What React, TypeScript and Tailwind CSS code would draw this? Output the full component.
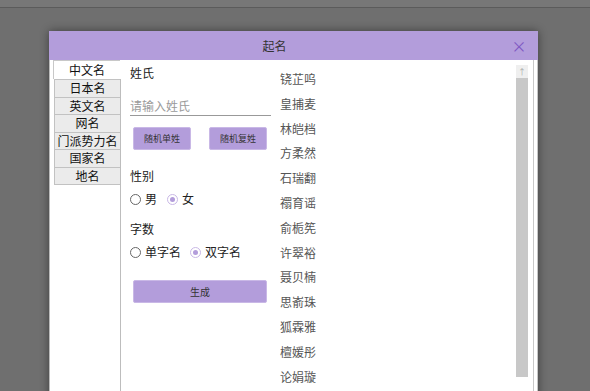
import { useState } from "react";

const tabs = ["中文名", "日本名", "英文名", "网名", "门派势力名", "国家名", "地名"];

const names = [
  "铙芷呜",
  "皇捕麦",
  "林皑档",
  "方柔然",
  "石瑞翻",
  "禤育谣",
  "俞栀筅",
  "许翠裕",
  "聂贝楠",
  "思嵛珠",
  "狐霖雅",
  "檀媛彤",
  "论娟璇",
];

const Radio = ({ label, checked, onClick }: { label: string; checked: boolean; onClick: () => void }) => (
  <button type="button" onClick={onClick} className="flex items-center gap-[4px] text-[12px] text-[#222]">
    <span
      className={
        checked
          ? "flex h-[11px] w-[11px] items-center justify-center rounded-full border border-[#c9b8e6] bg-white"
          : "flex h-[11px] w-[11px] items-center justify-center rounded-full border border-[#666] bg-white"
      }
    >
      {checked && <span className="h-[5px] w-[5px] rounded-full bg-[#b39ddb]" />}
    </span>
    {label}
  </button>
);

const App = () => {
  const [tab, setTab] = useState(0);
  const [gender, setGender] = useState("女");
  const [count, setCount] = useState("双字名");

  return (
    <div
      className="h-[391px] w-[590px] overflow-hidden bg-[#6f6f6f]"
      style={{ fontFamily: '"Noto Sans CJK SC", "Noto Sans", sans-serif' }}
    >
      <div className="h-[8px] border-b border-[#5b5b5b] bg-[#777]" />

      <div className="ml-[49px] mt-[23px] w-[489px] rounded-t-[2px] bg-white shadow-[0_0_10px_rgba(0,0,0,0.45)]">
        {/* title bar */}
        <div className="flex h-[29px] items-center bg-[#b39ddb] text-[12px] text-[#333]">
          <div className="flex-1 text-center">起名</div>
          <div className="w-[38px] text-center text-[15px] leading-none text-[#7e57c2]">×</div>
        </div>

        <div className="flex h-[340px] border-l border-[#bbb]">
          {/* tabs */}
          <div className="flex w-[71px] pl-[3px]">
            <div className="flex w-[67px] flex-col">
              {tabs.map((t, i) =>
                i === tab ? (
                  <button
                    key={t}
                    type="button"
                    className="h-[19px] border-l border-t border-[#c8c8c8] bg-white text-[12px] leading-[18px] text-[#111]"
                  >
                    {t}
                  </button>
                ) : (
                  <button
                    key={t}
                    type="button"
                    onClick={() => setTab(i)}
                    className={
                      i === 1
                        ? "ml-[1px] h-[18.5px] border-y border-l border-[#c2c2c2] bg-[#ebebeb] text-[12px] leading-[16px] text-[#111]"
                        : "ml-[1px] h-[17.5px] border-b border-l border-[#c2c2c2] bg-[#ebebeb] text-[12px] leading-[16px] text-[#111]"
                    }
                  >
                    {t}
                  </button>
                )
              )}
            </div>
            <div className="mt-[19px] w-[1px] bg-[#bdbdbd]" />
          </div>

          {/* form */}
          <div className="flex w-[150px] flex-col pl-[9px] pt-[6px] text-[12px] text-[#222]">
            <div className="leading-[14px]">姓氏</div>
            <input
              placeholder="请输入姓氏"
              className="mt-[16px] h-[20px] w-[141px] border-b border-[#999] bg-transparent text-[12px] text-[#333] outline-none placeholder:text-[#9a9a9a]"
            />
            <div className="ml-[3px] mt-[11px] flex gap-[18px]">
              <button
                type="button"
                className="h-[23px] w-[58px] rounded-[2px] border border-[#c9b8e6] bg-[#b39ddb] text-[9px] text-[#333]"
              >
                随机单姓
              </button>
              <button
                type="button"
                className="h-[23px] w-[58px] rounded-[2px] border border-[#c9b8e6] bg-[#b39ddb] text-[9px] text-[#333]"
              >
                随机复姓
              </button>
            </div>

            <div className="mt-[19px] leading-[14px]">性别</div>
            <div className="mt-[7px] flex gap-[10px]">
              <Radio label="男" checked={gender === "男"} onClick={() => setGender("男")} />
              <Radio label="女" checked={gender === "女"} onClick={() => setGender("女")} />
            </div>

            <div className="mt-[14px] leading-[14px]">字数</div>
            <div className="mt-[7px] flex gap-[9px]">
              <Radio label="单字名" checked={count === "单字名"} onClick={() => setCount("单字名")} />
              <Radio label="双字名" checked={count === "双字名"} onClick={() => setCount("双字名")} />
            </div>

            <button
              type="button"
              className="ml-[3px] mt-[19px] h-[23px] w-[134px] shrink-0 rounded-[2px] border border-[#c9b8e6] bg-[#b39ddb] text-[10px] text-[#333]"
            >
              生成
            </button>
          </div>

          {/* results */}
          <div className="flex flex-1 flex-col pl-[9px] pt-[7px] text-[12px] text-[#555]">
            {names.map((n) => (
              <div key={n} className="h-[24.8px] leading-[24.8px]">
                {n}
              </div>
            ))}
          </div>

          {/* scrollbar */}
          <div className="flex w-[12px] flex-col pt-[5px]">
            <div className="flex h-[13px] items-center justify-center bg-[#efefef] text-[8px] leading-none text-[#aaa]">
              ↑
            </div>
            <div className="h-[299px] bg-[#c8c8c8]" />
          </div>
          <div className="w-[5px]" />
          <div className="w-[1px] bg-[#c8c8c8]" />
          <div className="w-[3px]" />
          <div className="w-[1px] bg-[#c8c8c8]" />
        </div>
      </div>
    </div>
  );
};

export default App;
